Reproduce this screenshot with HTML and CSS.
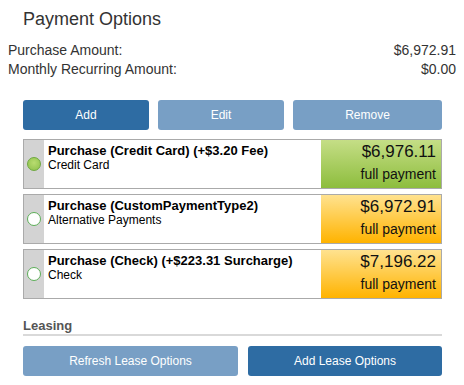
FILE: index.html
```html
<!DOCTYPE html>
<html lang="en">

<head>
    <meta charset="UTF-8">
    <meta name="viewport" content="width=device-width, initial-scale=1.0">
    <link rel="stylesheet" href="styles.css">
    <title>Payment Options</title>
</head>

<body>
    <h2 class="title">Payment Options</h2>

    <div class="summary">
        <div class="summary-row"><span>Purchase Amount:</span><span>$6,972.91</span></div>
        <div class="summary-row"><span>Monthly Recurring Amount:</span><span>$0.00</span></div>
    </div>

    <div class="content">
        <div class="actions">
            <button class="btn btn-dark btn-add">Add</button>
            <button class="btn btn-light btn-edit">Edit</button>
            <button class="btn btn-light btn-remove">Remove</button>
        </div>

        <div class="options">
            <div class="option">
                <div class="option-check"><span class="radio checked"></span></div>
                <div class="option-info">
                    <div class="option-name">Purchase (Credit Card) (+$3.20 Fee)</div>
                    <div class="option-type">Credit Card</div>
                </div>
                <div class="option-price green">
                    <div class="price">$6,976.11</div>
                    <div class="price-note">full payment</div>
                </div>
            </div>
            <div class="option">
                <div class="option-check"><span class="radio"></span></div>
                <div class="option-info">
                    <div class="option-name">Purchase (CustomPaymentType2)</div>
                    <div class="option-type">Alternative Payments</div>
                </div>
                <div class="option-price orange">
                    <div class="price">$6,972.91</div>
                    <div class="price-note">full payment</div>
                </div>
            </div>
            <div class="option">
                <div class="option-check"><span class="radio"></span></div>
                <div class="option-info">
                    <div class="option-name">Purchase (Check) (+$223.31 Surcharge)</div>
                    <div class="option-type">Check</div>
                </div>
                <div class="option-price orange">
                    <div class="price">$7,196.22</div>
                    <div class="price-note">full payment</div>
                </div>
            </div>
        </div>

        <h3 class="section">Leasing</h3>
        <div class="actions lease-actions">
            <button class="btn btn-light btn-refresh">Refresh Lease Options</button>
            <button class="btn btn-dark btn-lease">Add Lease Options</button>
        </div>
    </div>
</body>

</html>
```

FILE: styles.css
```css
* {
    margin: 0;
    padding: 0;
    box-sizing: border-box;
}

body {
    font-family: "Liberation Sans", Arial, sans-serif;
    color: #333;
    background: #fff;
}

.title {
    font-size: 18px;
    font-weight: normal;
    line-height: 24px;
    padding: 7px 23px 0;
}

.summary {
    margin-top: 10px;
    padding: 0 8px;
    font-size: 14px;
    line-height: 19px;
}

.summary-row {
    display: flex;
    justify-content: space-between;
}

.content {
    width: 419px;
    margin: 21px 0 0 23px;
}

.actions {
    display: flex;
    gap: 9px;
}

.btn {
    height: 30px;
    border: none;
    border-radius: 3px;
    color: #fff;
    font-family: inherit;
    font-size: 12px;
}

.btn-dark {
    background-color: #2e6ca3;
}

.btn-light {
    background-color: #789fc5;
}

.btn-add,
.btn-edit {
    width: 126px;
}

.btn-remove {
    flex: 1;
}

.options {
    margin-top: 9px;
    display: flex;
    flex-direction: column;
    gap: 5px;
}

.option {
    display: flex;
    height: 50px;
    border: 1px solid #aaa;
}

.option-check {
    width: 20px;
    background-color: #d3d3d3;
    display: flex;
    align-items: center;
    justify-content: center;
}

.radio {
    width: 14px;
    height: 14px;
    border-radius: 50%;
    border: 1.5px solid #5cae57;
    background-color: #fff;
}

.radio.checked {
    border-color: #6ea83e;
    background: radial-gradient(circle at 50% 40%, #b8dc70, #8dc04a);
}

.option-info {
    flex: 1;
    padding: 3px 4px 0;
    color: #000;
}

.option-name {
    font-size: 13px;
    font-weight: bold;
    line-height: 15px;
}

.option-type {
    font-size: 12px;
    line-height: 14px;
}

.option-price {
    width: 120px;
    padding: 0 5px 0 0;
    text-align: right;
    color: #111;
}

.green {
    background: linear-gradient(#c5de86, #8dbd3d);
}

.orange {
    background: linear-gradient(#ffe28f, #ffb300);
}

.price {
    font-size: 17px;
    line-height: 22px;
    padding-top: 1px;
}

.price-note {
    font-size: 14px;
    line-height: 20px;
    margin-top: 1px;
}

.section {
    margin-top: 19px;
    font-size: 13px;
    line-height: 15px;
    color: #555;
    padding-bottom: 1px;
    border-bottom: 2px solid #d9d9d9;
}

.lease-actions {
    margin-top: 10px;
    gap: 10px;
}

.btn-refresh {
    width: 215px;
}

.btn-lease {
    flex: 1;
}
```
